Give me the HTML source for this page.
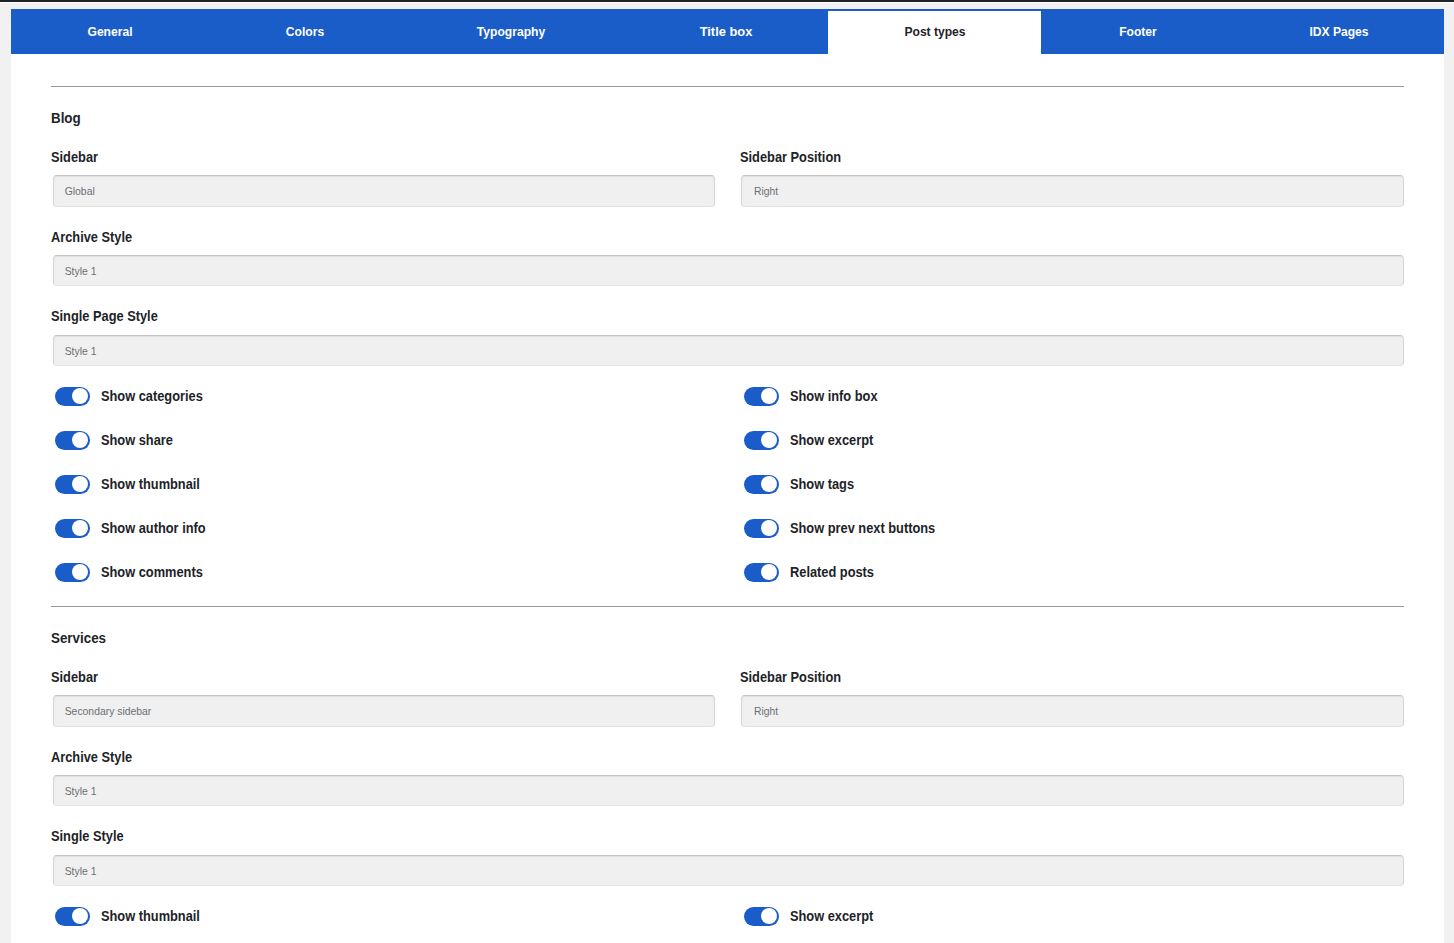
<!DOCTYPE html>
<html><head><meta charset="utf-8"><title>Post types</title><style>
*{box-sizing:border-box;margin:0;padding:0}
html,body{width:1454px;height:943px;overflow:hidden;background:#f1f1f1;font-family:"Liberation Sans",sans-serif;color:#1d2327}
.a{position:absolute}
.topbar{left:0;top:0;width:1454px;height:2px;background:#1d2327}
.panel{left:11px;top:9px;width:1433px;height:934px;background:#fff}
.tabbar{left:11px;top:9px;width:1433px;height:45px;background:#1b5dc8}
.act{left:828px;top:11px;width:213px;height:43px;background:#fff}
.tab{width:200px;text-align:center;font-weight:bold;font-size:13px;line-height:16px;color:#fff;white-space:nowrap;transform:scaleX(0.93)}
.tab.on{color:#1d2327}
.hr{left:51px;width:1353px;height:1px;background:#9a9a9a}
.h{font-weight:bold;font-size:14px;line-height:16px;white-space:nowrap;transform:scaleX(0.915);transform-origin:0 50%}
.inp{height:32px;background:#f0f0f0;border:1px solid #d5d5d5;border-top-color:#c4c4c4;border-bottom-color:#e2e2e2;border-radius:4px;box-shadow:inset 0 1px 1px rgba(0,0,0,.06)}
.v{font-size:10.4px;line-height:14px;color:#6b6f74;white-space:nowrap}
.tg{width:35px;height:19px;border-radius:10px;background:#1b5dc8}
.tg i{position:absolute;left:17px;top:0.5px;width:16px;height:16px;border-radius:50%;background:#fff}
</style></head>
<body>
<div class="a topbar"></div>
<div class="a" style="left:0;top:2px;width:1454px;height:1px;background:#fff"></div>
<div class="a panel"></div>
<div class="a tabbar"></div>
<div class="a act"></div>
<div class="a tab" style="left:10px;top:24px;">General</div>
<div class="a tab" style="left:205px;top:24px;">Colors</div>
<div class="a tab" style="left:411px;top:24px;">Typography</div>
<div class="a tab" style="left:625.5px;top:24px;transform:scaleX(0.99);">Title box</div>
<div class="a tab on" style="left:834.5px;top:24px;">Post types</div>
<div class="a tab" style="left:1037.5px;top:24px;">Footer</div>
<div class="a tab" style="left:1238.5px;top:24px;">IDX Pages</div>
<div class="a hr" style="left:51px;top:86px;"></div>
<div class="a h" style="left:51px;top:109.84px;transform:scaleX(0.955);">Blog</div>
<div class="a h" style="left:51px;top:148.83px;">Sidebar</div>
<div class="a h" style="left:740px;top:148.83px;">Sidebar Position</div>
<div class="a inp" style="left:53px;top:175px;width:662px;height:32px;"></div>
<div class="a v" style="left:64.7px;top:184.8px;">Global</div>
<div class="a inp" style="left:741px;top:175px;width:663px;height:32px;"></div>
<div class="a v" style="left:754px;top:184.8px;">Right</div>
<div class="a h" style="left:51px;top:228.83px;">Archive Style</div>
<div class="a inp" style="left:53px;top:255px;width:1351px;height:31px;"></div>
<div class="a v" style="left:64.7px;top:264.8px;">Style 1</div>
<div class="a h" style="left:51px;top:307.83px;">Single Page Style</div>
<div class="a inp" style="left:53px;top:335px;width:1351px;height:31px;"></div>
<div class="a v" style="left:64.7px;top:344.8px;">Style 1</div>
<div class="a tg" style="left:55px;top:387px;"><i></i></div>
<div class="a h" style="left:101px;top:388.13px;">Show categories</div>
<div class="a tg" style="left:55px;top:431px;"><i></i></div>
<div class="a h" style="left:101px;top:432.13px;">Show share</div>
<div class="a tg" style="left:55px;top:475px;"><i></i></div>
<div class="a h" style="left:101px;top:476.13px;">Show thumbnail</div>
<div class="a tg" style="left:55px;top:519px;"><i></i></div>
<div class="a h" style="left:101px;top:520.13px;">Show author info</div>
<div class="a tg" style="left:55px;top:563px;"><i></i></div>
<div class="a h" style="left:101px;top:564.13px;">Show comments</div>
<div class="a tg" style="left:744px;top:387px;"><i></i></div>
<div class="a h" style="left:790px;top:388.13px;">Show info box</div>
<div class="a tg" style="left:744px;top:431px;"><i></i></div>
<div class="a h" style="left:790px;top:432.13px;">Show excerpt</div>
<div class="a tg" style="left:744px;top:475px;"><i></i></div>
<div class="a h" style="left:790px;top:476.13px;">Show tags</div>
<div class="a tg" style="left:744px;top:519px;"><i></i></div>
<div class="a h" style="left:790px;top:520.13px;">Show prev next buttons</div>
<div class="a tg" style="left:744px;top:563px;"><i></i></div>
<div class="a h" style="left:790px;top:564.13px;">Related posts</div>
<div class="a hr" style="left:51px;top:606px;"></div>
<div class="a h" style="left:51px;top:629.84px;transform:scaleX(0.955);">Services</div>
<div class="a h" style="left:51px;top:668.84px;">Sidebar</div>
<div class="a h" style="left:740px;top:668.84px;">Sidebar Position</div>
<div class="a inp" style="left:53px;top:695px;width:662px;height:32px;"></div>
<div class="a v" style="left:64.7px;top:704.8px;">Secondary sidebar</div>
<div class="a inp" style="left:741px;top:695px;width:663px;height:32px;"></div>
<div class="a v" style="left:754px;top:704.8px;">Right</div>
<div class="a h" style="left:51px;top:748.84px;">Archive Style</div>
<div class="a inp" style="left:53px;top:775px;width:1351px;height:31px;"></div>
<div class="a v" style="left:64.7px;top:784.8px;">Style 1</div>
<div class="a h" style="left:51px;top:827.84px;">Single Style</div>
<div class="a inp" style="left:53px;top:855px;width:1351px;height:31px;"></div>
<div class="a v" style="left:64.7px;top:864.8px;">Style 1</div>
<div class="a tg" style="left:55px;top:907px;"><i></i></div>
<div class="a h" style="left:101px;top:908.13px;">Show thumbnail</div>
<div class="a tg" style="left:744px;top:907px;"><i></i></div>
<div class="a h" style="left:790px;top:908.13px;">Show excerpt</div>
</body></html>
